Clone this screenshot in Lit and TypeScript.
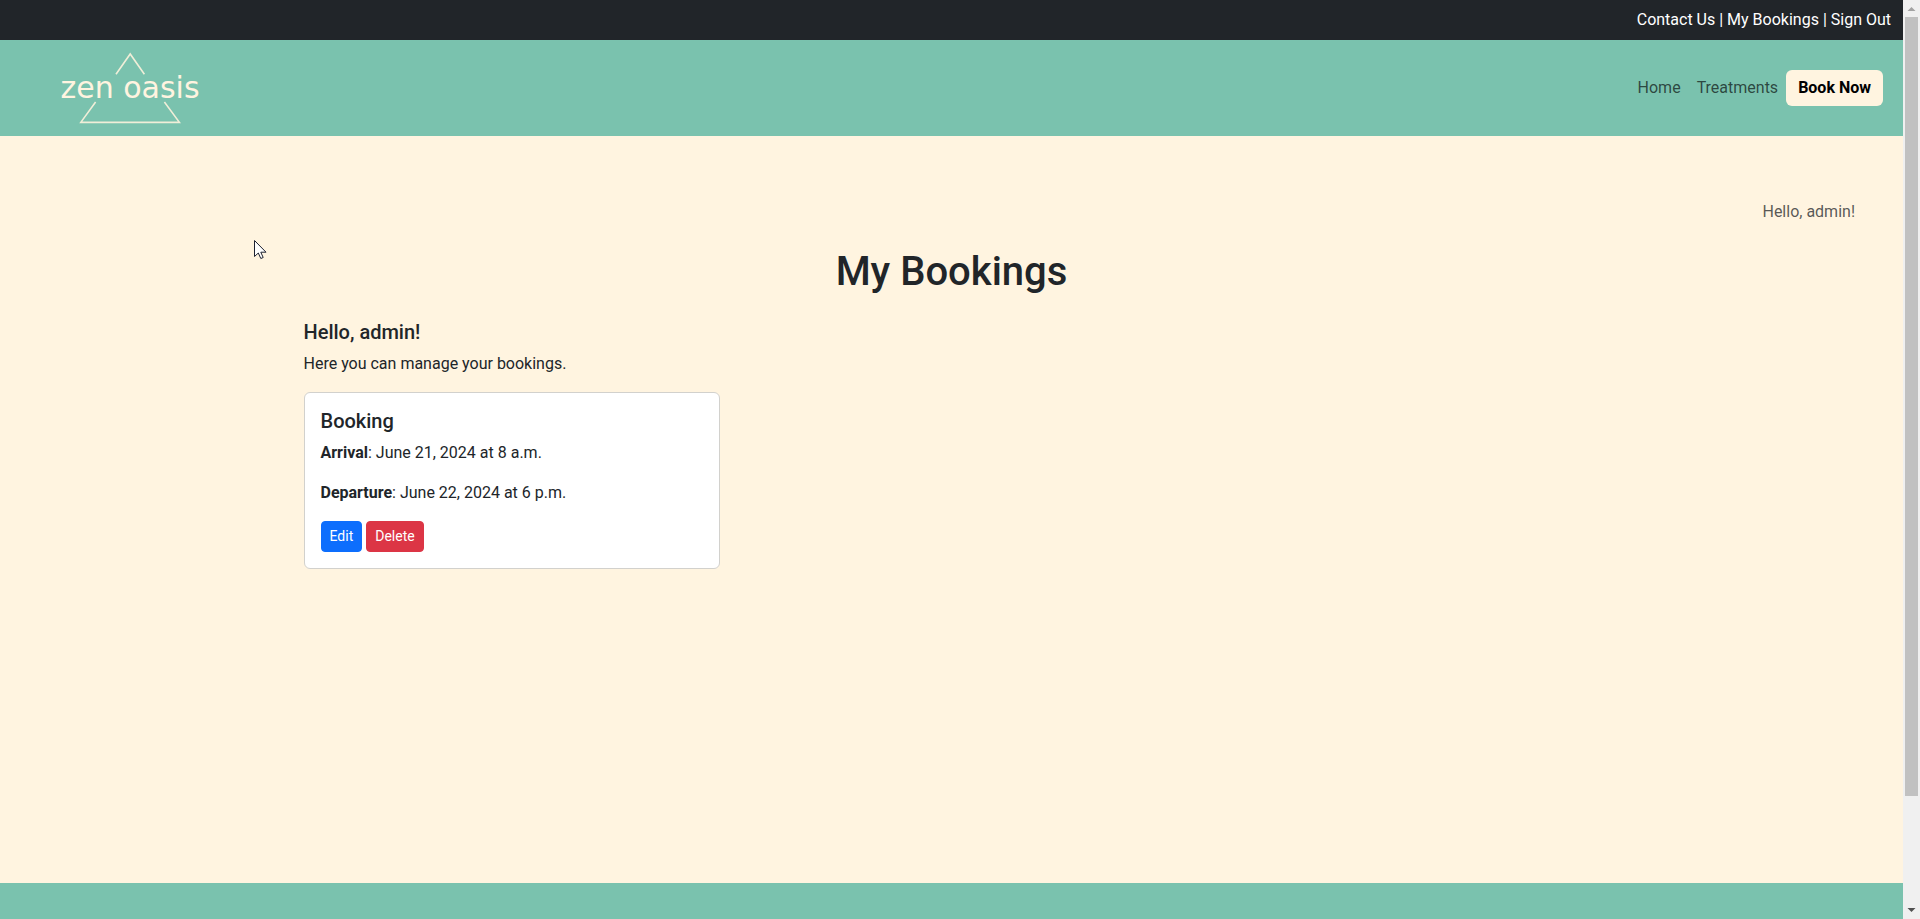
import { LitElement, html, css } from "lit";
import { customElement, property } from "lit/decorators.js";

@customElement("zen-logo")
class ZenLogo extends LitElement {
  static styles = css`
    :host { display: block; }
    .logo { display: block; }
    .word { font: 400 30px "DejaVu Sans", Verdana, sans-serif; fill: #fff4e0; }
    .line { fill: none; stroke: #f0eed8; stroke-width: 1.6; }
  `;
  render() {
    return html`<svg class="logo" width="144" height="76" viewBox="0 0 144 76" role="img" aria-label="zen oasis">
      <path class="line" d="M56 24.2 L70.2 4 L84.4 24.2" />
      <path class="line" d="M35.6 52 L20.8 72.4 H119.4 L104.4 52" />
      <text class="word" x="70" y="48" text-anchor="middle">zen oasis</text>
    </svg>`;
  }
}

@customElement("booking-card")
class BookingCard extends LitElement {
  @property() arrival = "";
  @property() departure = "";
  static styles = css`
    :host { display: block; }
    .card { border: 1px solid #d2d1cd; border-radius: 6px; background: #fff; padding: 16px; }
    .title { margin: 0 0 8px; font-size: 20px; line-height: 24px; font-weight: 500; }
    .line { margin: 0 0 16px; }
    .label { font-weight: 700; }
    .actions { display: flex; gap: 4px; }
    .btn {
      font: 400 14px/21px Roboto, sans-serif;
      color: #fff;
      border: 1px solid;
      border-radius: 4px;
      padding: 4px 8px;
      cursor: pointer;
    }
    .edit { background: #0d6efd; border-color: #0d6efd; }
    .delete { background: #dc3545; border-color: #dc3545; }
  `;
  render() {
    return html`<article class="card">
      <h5 class="title">Booking</h5>
      <p class="line"><strong class="label">Arrival</strong>: ${this.arrival}</p>
      <p class="line"><strong class="label">Departure</strong>: ${this.departure}</p>
      <div class="actions">
        <button class="btn edit" type="button">Edit</button>
        <button class="btn delete" type="button">Delete</button>
      </div>
    </article>`;
  }
}

@customElement("app-root")
class AppRoot extends LitElement {
  static styles = css`
    :host {
      display: flex;
      position: relative;
      height: 100vh;
      overflow: hidden;
      background: #fff4e0;
      color: #212529;
      font: 400 16px/24px Roboto, sans-serif;
    }
    * { box-sizing: border-box; }
    a { color: inherit; text-decoration: none; }
    .page { flex: 1; min-width: 0; display: flex; flex-direction: column; }
    .topbar {
      background: #212529;
      color: #fff;
      font-weight: 400;
      text-align: right;
      padding: 8px 12px;
    }
    .navbar {
      background: #7ac2ae;
      display: flex;
      align-items: center;
      justify-content: space-between;
      padding: 10px 20px 10px 60px;
    }
    .links { display: flex; align-items: center; }
    .link { padding: 6px 8px; color: rgba(0, 0, 0, 0.65); }
    .book {
      background: #fff4e0;
      color: #000;
      font-weight: 700;
      border-radius: 6px;
      padding: 6px 12px;
    }
    .main { flex: 1; padding-top: 64px; }
    .greeting { margin: 0 0 24px; padding-right: 48px; text-align: right; color: rgba(33, 37, 41, 0.75); }
    .container { max-width: 1320px; margin: 0 auto; padding: 0 12px; }
    .heading { margin: 0 0 24px; font-size: 40px; line-height: 48px; font-weight: 500; text-align: center; }
    .hello { margin: 0 0 8px; font-size: 20px; line-height: 24px; font-weight: 500; }
    .intro { margin: 0 0 16px; }
    .cards { display: grid; grid-template-columns: repeat(3, 1fr); gap: 24px; }
    .footer { height: 36px; background: #7ac2ae; }
    .scrollbar {
      width: 17px;
      background: #f0f0f0;
      display: flex;
      flex-direction: column;
      align-items: center;
    }
    .arrow { display: block; width: 17px; height: 17px; flex: none; }
    .track { flex: 1; width: 13px; }
    .thumb { height: 88%; background: #c1c1c1; }
    .pointer { position: absolute; left: 254px; top: 239px; }
  `;
  render() {
    return html`
      <div class="page">
        <div class="topbar">
          <a href="#contact">Contact Us</a> | <a href="#bookings">My Bookings</a> | <a href="#signout">Sign Out</a>
        </div>
        <nav class="navbar">
          <a href="#home"><zen-logo></zen-logo></a>
          <div class="links">
            <a class="link" href="#home">Home</a>
            <a class="link" href="#treatments">Treatments</a>
            <a class="book" href="#book">Book Now</a>
          </div>
        </nav>
        <main class="main">
          <p class="greeting">Hello, admin!</p>
          <div class="container">
            <h1 class="heading">My Bookings</h1>
            <h5 class="hello">Hello, admin!</h5>
            <p class="intro">Here you can manage your bookings.</p>
            <div class="cards">
              <booking-card arrival="June 21, 2024 at 8 a.m." departure="June 22, 2024 at 6 p.m."></booking-card>
            </div>
          </div>
        </main>
        <footer class="footer"></footer>
      </div>
      <div class="scrollbar" aria-hidden="true">
        <svg class="arrow" viewBox="0 0 17 17"><path d="M4.5 11 L8.5 7 L12.5 11 Z" fill="#a3a3a3" /></svg>
        <div class="track"><div class="thumb"></div></div>
        <svg class="arrow" viewBox="0 0 17 17"><path d="M4.5 6 L8.5 10 L12.5 6 Z" fill="#505050" /></svg>
      </div>
      <svg class="pointer" width="13" height="21" viewBox="0 0 13 21" aria-hidden="true">
        <path d="M0.5 1.5 V17.5 L4.3 14 L6.8 19.5 L9.2 18.5 L6.8 13.2 H12 Z" fill="#fff" stroke="#1c2030" />
      </svg>
    `;
  }
}
